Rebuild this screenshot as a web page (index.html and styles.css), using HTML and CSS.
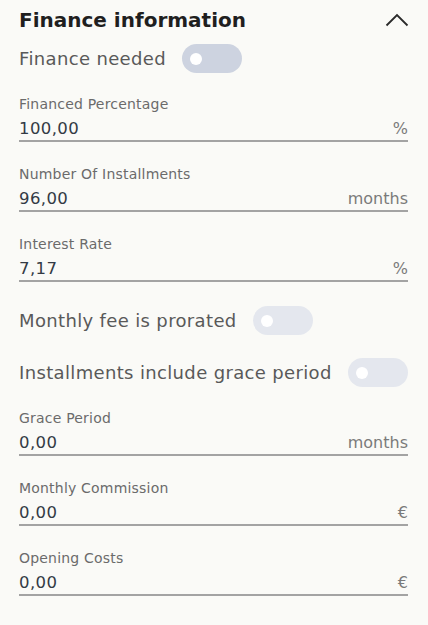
FILE: index.html
```html
<!DOCTYPE html>
<html lang="en">
<head>
<meta charset="utf-8">
<title>Finance information</title>
<link rel="stylesheet" href="styles.css">
</head>
<body>
<section class="panel">
  <header class="panel-header">
    <h2 class="panel-title">Finance information</h2>
    <svg class="chevron" width="24" height="14" viewBox="0 0 24 14" aria-hidden="true">
      <path d="M1.5 12.5 L12 2 L22.5 12.5" fill="none" stroke="#2a2a2a" stroke-width="1.8"/>
    </svg>
  </header>

  <div class="panel-body">
    <div class="toggle-row">
      <span class="toggle-label">Finance needed</span>
      <span class="toggle toggle-strong"><span class="knob"></span></span>
    </div>

    <div class="field">
      <div class="field-label">Financed Percentage</div>
      <div class="field-input"><span class="value">100,00</span><span class="unit">%</span></div>
    </div>

    <div class="field">
      <div class="field-label">Number Of Installments</div>
      <div class="field-input"><span class="value">96,00</span><span class="unit">months</span></div>
    </div>

    <div class="field">
      <div class="field-label">Interest Rate</div>
      <div class="field-input"><span class="value">7,17</span><span class="unit">%</span></div>
    </div>

    <div class="toggle-row">
      <span class="toggle-label">Monthly fee is prorated</span>
      <span class="toggle"><span class="knob"></span></span>
    </div>

    <div class="toggle-row">
      <span class="toggle-label">Installments include grace period</span>
      <span class="toggle"><span class="knob"></span></span>
    </div>

    <div class="field">
      <div class="field-label">Grace Period</div>
      <div class="field-input"><span class="value">0,00</span><span class="unit">months</span></div>
    </div>

    <div class="field">
      <div class="field-label">Monthly Commission</div>
      <div class="field-input"><span class="value">0,00</span><span class="unit">€</span></div>
    </div>

    <div class="field">
      <div class="field-label">Opening Costs</div>
      <div class="field-input"><span class="value">0,00</span><span class="unit">€</span></div>
    </div>
  </div>
</section>
</body>
</html>
```

FILE: styles.css
```css
* { box-sizing: border-box; }

html, body {
  margin: 0;
  padding: 0;
  background: #fafaf7;
}

body {
  font-family: "DejaVu Sans", "Noto Sans", "Liberation Sans", sans-serif;
  color: #333;
}

.panel {
  padding: 8px 20px 0 19px;
}

.panel-header {
  display: flex;
  align-items: center;
  justify-content: space-between;
  height: 24px;
}

.panel-title {
  margin: 0;
  font-size: 20px;
  line-height: 24px;
  font-weight: 700;
  color: #1f1f1f;
}

.chevron {
  margin-right: -1px;
}

.panel-body {
  display: flex;
  flex-direction: column;
  gap: 24px;
  margin-top: 12px;
}

.toggle-row + .field,
.toggle-row + .toggle-row {
  margin-top: -1px;
}

.toggle-row {
  display: flex;
  align-items: center;
  gap: 16px;
  height: 29px;
}

.toggle-label {
  font-size: 18px;
  line-height: 24px;
  letter-spacing: 0.35px;
  color: #595959;
}

.toggle {
  display: flex;
  align-items: center;
  width: 60px;
  height: 29px;
  border-radius: 15px;
  background: #e4e7ee;
  padding-left: 8px;
}

.toggle-strong {
  background: #cdd3e0;
}

.knob {
  width: 12px;
  height: 12px;
  border-radius: 50%;
  background: #ffffff;
}

.field {
  display: flex;
  flex-direction: column;
  gap: 7px;
}

.field-label {
  font-size: 14px;
  line-height: 16px;
  letter-spacing: 0.2px;
  color: #6b6b6b;
}

.field-input {
  display: flex;
  justify-content: space-between;
  align-items: baseline;
  padding-bottom: 1px;
  border-bottom: 2px solid #a3a3a3;
}

.value {
  font-size: 16.5px;
  line-height: 20px;
  letter-spacing: 0.4px;
  color: #333a45;
}

.unit {
  font-size: 16px;
  line-height: 20px;
  color: #7a7a7a;
}
```
